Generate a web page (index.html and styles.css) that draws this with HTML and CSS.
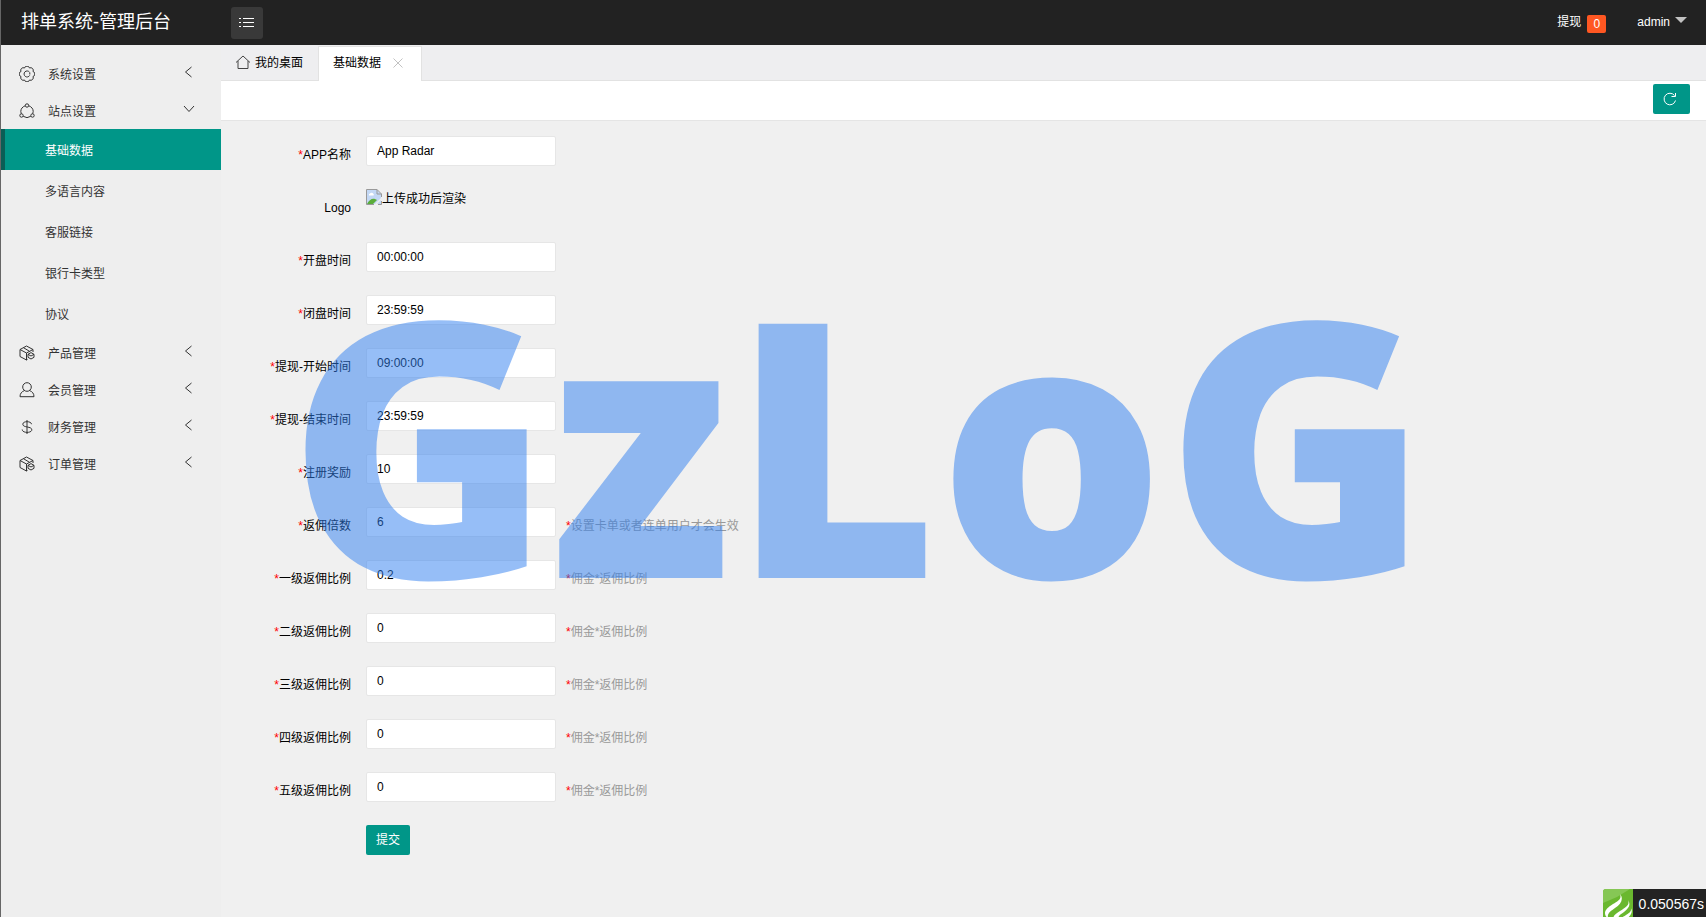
FILE: index.html
```html
<!DOCTYPE html>
<html lang="zh-CN">
<head>
<meta charset="utf-8">
<title>排单系统-管理后台</title>
<link rel="stylesheet" href="styles.css">
</head>
<body>
<svg class="defs" aria-hidden="true">
  <symbol id="i-gear" viewBox="0 0 16 16"><path d="M5.500 2A2.600 2.600 0 0 1 10.500 2 2.600 2.600 0 0 1 14 5.500 2.600 2.600 0 0 1 14 10.500 2.600 2.600 0 0 1 10.500 14 2.600 2.600 0 0 1 5.500 14 2.600 2.600 0 0 1 2 10.500 2.600 2.600 0 0 1 2 5.500 2.600 2.600 0 0 1 5.500 2z"/><path d="M10.500 6.200a3 3 0 1 0 .2 3.200M10.800 6.500v2"/></symbol>
  <symbol id="i-share" viewBox="0 0 16 16"><circle cx="8" cy="2.500" r="1.700"/><circle cx="2.500" cy="12.500" r="1.700"/><circle cx="13.500" cy="12.500" r="1.700"/><path d="M6.300 2.700Q1.800 4.500 1.800 8.500L2.300 10.800M9.700 2.700Q14.200 4.500 14.200 8.500L13.700 10.800M4.200 13.300Q8 16 11.800 13.300"/></symbol>
  <symbol id="i-cube" viewBox="0 0 16 16"><path d="M8.500 14.400 7.500 15 1 11.500V4.500L7.500 1 14 4.500V7M1 4.500 7.500 8 14 4.500M7.500 8v7M4.500 2.700 10.500 6.300"/><path d="M12 7.600l3 1.700v3l-3 1.700-3-1.700v-3zM9 9.300l3 1.700 3-1.700"/></symbol>
  <symbol id="i-user" viewBox="0 0 16 16"><circle cx="8" cy="5" r="4.300"/><path d="M5.500 8.500C2.500 9.700 1 11.700 1 14.700h14c0-3-1.500-5-4.500-6.200"/></symbol>
  <symbol id="i-dollar" viewBox="0 0 16 16"><path d="M12.500 5.200C12.500 2 3.800 1.700 3.800 5.200c0 3.800 9 1.800 9 5.600 0 3.500-9.600 3.500-9.600-.3M8 1v14"/></symbol>
  <symbol id="i-left" viewBox="0 0 16 16"><path d="M10.500 3 4.500 8l6 5"/></symbol>
  <symbol id="i-down" viewBox="0 0 16 16"><path d="M3 5l5 5.500L13 5"/></symbol>
</svg>

<header class="header">
  <h1 class="brand">排单系统-管理后台</h1>
  <button class="toggle" type="button" aria-label="菜单">
    <svg class="icon" viewBox="0 0 16 16"><path d="M4 3.500h11M4 7.500h11M4 11.500h11M0 3.500h2M0 7.500h2M0 11.500h2"/></svg>
  </button>
  <nav class="user-nav">
    <a class="withdraw" href="#">提现<span class="badge">0</span></a>
    <a class="account" href="#">admin<span class="caret"></span></a>
  </nav>
</header>

<div class="shell">
  <aside class="sidebar">
    <nav>
      <a class="menu" href="#"><svg class="icon"><use href="#i-gear"/></svg><span>系统设置</span><svg class="icon arrow"><use href="#i-left"/></svg></a>
      <a class="menu" href="#"><svg class="icon"><use href="#i-share"/></svg><span>站点设置</span><svg class="icon arrow"><use href="#i-down"/></svg></a>
      <div class="submenu">
        <a class="sub active" href="#">基础数据</a>
        <a class="sub" href="#">多语言内容</a>
        <a class="sub" href="#">客服链接</a>
        <a class="sub" href="#">银行卡类型</a>
        <a class="sub" href="#">协议</a>
      </div>
      <a class="menu" href="#"><svg class="icon"><use href="#i-cube"/></svg><span>产品管理</span><svg class="icon arrow"><use href="#i-left"/></svg></a>
      <a class="menu" href="#"><svg class="icon"><use href="#i-user"/></svg><span>会员管理</span><svg class="icon arrow"><use href="#i-left"/></svg></a>
      <a class="menu" href="#"><svg class="icon"><use href="#i-dollar"/></svg><span>财务管理</span><svg class="icon arrow"><use href="#i-left"/></svg></a>
      <a class="menu" href="#"><svg class="icon"><use href="#i-cube"/></svg><span>订单管理</span><svg class="icon arrow"><use href="#i-left"/></svg></a>
    </nav>
  </aside>

  <main class="main">
    <div class="tabs">
      <a class="tab" href="#"><svg class="icon home" viewBox="0 0 16 16"><path d="M1 7.500 8 1l7 6.500M3 6v7.500h10V6"/></svg>我的桌面</a>
      <a class="tab current" href="#">基础数据<svg class="icon close" viewBox="0 0 12 12"><path d="M1.500 1.500l9 9M10.500 1.500l-9 9"/></svg></a>
    </div>
    <div class="toolbar">
      <button class="refresh" type="button" aria-label="刷新"><svg class="icon" viewBox="0 0 16 16"><path d="M12.500 4.500A5.800 5.800 0 1 0 13.500 9.500M13.500 2V5.500H9.500"/></svg></button>
    </div>
    <form class="form">
      <div class="row"><label for="f1"><i>*</i>APP名称</label><input id="f1" type="text" value="App Radar"></div>
      <div class="row"><span class="label">Logo</span><div class="upload"><svg class="broken" viewBox="0 0 16 16"><path fill="#c3d8f5" d="M1 1h10l4 4v10H1z"/><path fill="#fff" d="M3 6.500a1.500 1.500 0 0 1 1-2 2 2 0 0 1 3.500.5 1 1 0 0 1 0 1.500z"/><path fill="#5bad3b" d="M1 15c2-4 5-6 8-5l2 1-4 4z"/><path fill="#f0f0f0" d="M8.500 15.500 15.500 8.500v2L10.500 15.500z"/><path fill="none" stroke="#999" d="M8 15.500H.5V.5h10.500l4.500 4.500v3M11 .5V5h4.500M12 15.500h3.500V12"/></svg>上传成功后渲染</div></div>
      <div class="row"><label for="f2"><i>*</i>开盘时间</label><input id="f2" type="text" value="00:00:00"></div>
      <div class="row"><label for="f3"><i>*</i>闭盘时间</label><input id="f3" type="text" value="23:59:59"></div>
      <div class="row"><label for="f4"><i>*</i>提现-开始时间</label><input id="f4" type="text" value="09:00:00"></div>
      <div class="row"><label for="f5"><i>*</i>提现-结束时间</label><input id="f5" type="text" value="23:59:59"></div>
      <div class="row"><label for="f6"><i>*</i>注册奖励</label><input id="f6" type="text" value="10"></div>
      <div class="row"><label for="f7"><i>*</i>返佣倍数</label><input id="f7" type="text" value="6"><span class="hint"><i>*</i>设置卡单或者连单用户才会生效</span></div>
      <div class="row"><label for="f8"><i>*</i>一级返佣比例</label><input id="f8" type="text" value="0.2"><span class="hint"><i>*</i>佣金*返佣比例</span></div>
      <div class="row"><label for="f9"><i>*</i>二级返佣比例</label><input id="f9" type="text" value="0"><span class="hint"><i>*</i>佣金*返佣比例</span></div>
      <div class="row"><label for="f10"><i>*</i>三级返佣比例</label><input id="f10" type="text" value="0"><span class="hint"><i>*</i>佣金*返佣比例</span></div>
      <div class="row"><label for="f11"><i>*</i>四级返佣比例</label><input id="f11" type="text" value="0"><span class="hint"><i>*</i>佣金*返佣比例</span></div>
      <div class="row"><label for="f12"><i>*</i>五级返佣比例</label><input id="f12" type="text" value="0"><span class="hint"><i>*</i>佣金*返佣比例</span></div>
      <div class="row"><span class="label"></span><button class="submit" type="button">提交</button></div>
    </form>
  </main>
</div>

<div class="watermark">GzLoG</div>

<div class="trace">
  <svg class="trace-logo" viewBox="0 0 30 30"><path fill="#6ab82f" d="M3 0h27v30H0V3q0-3 3-3z"/><path fill="#86c755" d="M3 0h24L14 8 0 14V3q0-3 3-3z"/><path fill="#fff" d="M17 5c2 5-2 7-7 10-5 3-8 6-8 9 0 2 1 4 3 5-1-5 3-7 7-10 6-4 9-9 5-14zM25 11c2 5-2 7-8 11-4 3-8 5-6 8h4c0-3 3-5 6-7 5-4 7-7 4-12zM28 19c1 3-2 5-5 7-3 2-4 2-4 4h4c5-3 7-7 5-11z"/></svg>
  <span class="trace-time">0.050567s</span>
</div>
</body>
</html>
```
FILE: styles.css
```css
* { box-sizing: border-box; }

body {
  margin: 0;
  min-height: 100vh;
  display: flex;
  flex-direction: column;
  border-left: 1px solid #666;
  background: #f0f0f0;
  color: #000;
  font: 12px/20px "Liberation Sans", "Noto Sans CJK SC", sans-serif;
  overflow: hidden;
}

a { color: inherit; text-decoration: none; }
i { color: #f00; font-style: normal; }
.defs { position: absolute; width: 0; height: 0; }

.icon {
  flex: none;
  width: 16px;
  height: 16px;
  fill: none;
  stroke: currentColor;
  stroke-width: 1;
}

.header {
  display: flex;
  align-items: center;
  height: 45px;
  padding: 0 19px 0 20px;
  background: #222;
  color: #fff;
}
.brand {
  width: 210px;
  margin: 0;
  font-size: 18px;
  line-height: 42px;
  padding-bottom: 2px;
  font-weight: 400;
}
.toggle {
  display: grid;
  place-items: center;
  width: 32px;
  height: 32px;
  padding: 0;
  border: 0;
  border-radius: 3px;
  background: #393939;
  color: #fff;
}
.user-nav { display: flex; gap: 31px; margin-left: auto; padding-bottom: 2px; }
.user-nav a { display: flex; align-items: center; }
.badge {
  margin: 4px 0 0 6px;
  width: 19px;
  height: 18px;
  border-radius: 2px;
  background: #ff5722;
  line-height: 18px;
  text-align: center;
}
.caret {
  margin: 0 0 4px 5px;
  border: 6px solid transparent;
  border-top-color: #c2c2c2;
  border-bottom: 0;
}

.shell { display: flex; flex: 1; }
.sidebar {
  flex: none;
  width: 220px;
  padding-top: 10px;
  background: #eee;
  color: #333;
}
.menu {
  display: flex;
  align-items: center;
  height: 37px;
  padding: 1px 24px 0 18px;
}
.menu span { flex: 1; margin-left: 13px; padding-top: 1px; }
.arrow { margin-bottom: 5px; }
.sub {
  display: block;
  height: 41px;
  padding-left: 44px;
  line-height: 44px;
}
.active {
  border-left: 4px solid #0a5e56;
  padding-left: 40px;
  background: #009688;
  color: #fff;
}

.main { flex: 1; min-width: 0; }
.tabs {
  display: flex;
  height: 36px;
  padding-top: 1px;
  border-bottom: 1px solid #e2e2e2;
  background: #eeeef0;
}
.tab {
  display: flex;
  align-items: center;
  gap: 4px;
  height: 34px;
  padding: 0 15px 0 14px;
}
.home { color: #444; }
.current {
  gap: 11px;
  height: 35px;
  padding: 0 17px 2px 14px;
  border: 1px solid #e2e2e2;
  border-bottom: 0;
  background: #fff;
}
.close { width: 12px; height: 12px; color: #c2c2c2; }
.toolbar {
  display: flex;
  justify-content: flex-end;
  height: 40px;
  padding: 3px 16px;
  border-bottom: 1px solid #e5e5e5;
  background: #fff;
}
.refresh {
  display: grid;
  place-items: center;
  width: 37px;
  height: 30px;
  padding: 0 3px 0 0;
  border: 0;
  border-radius: 2px;
  background: #009688;
  color: #fff;
}

.form { padding: 15px 20px; }
.row { display: flex; align-items: flex-start; height: 53px; }
.row label, .label {
  width: 110px;
  padding-top: 9px;
  text-align: right;
}
.row input {
  width: 190px;
  height: 30px;
  margin-left: 15px;
  padding: 0 10px;
  border: 1px solid #e6e6e6;
  border-radius: 2px;
  background: #fff;
  color: #000;
  font: inherit;
}
.hint { padding: 9px 0 0 10px; color: #999; }
.upload { display: flex; margin-left: 15px; }
.broken { width: 16px; height: 16px; }
.submit {
  height: 30px;
  margin-left: 15px;
  padding: 0 10px;
  border: 0;
  border-radius: 2px;
  background: #009688;
  color: #fff;
  font: inherit;
}

.watermark {
  position: absolute;
  top: 440px;
  left: 50%;
  padding-left: 10px;
  transform: translate(-50%, -50%);
  color: rgba(45, 125, 240, 0.5);
  font: 900 356px/1 "Noto Sans", sans-serif;
  pointer-events: none;
}

.trace {
  position: fixed;
  right: 0;
  bottom: 0;
  display: flex;
  height: 28px;
  overflow: hidden;
}
.trace-logo { width: 30px; height: 30px; }
.trace-time {
  padding: 0 2px 0 6px;
  background: #232323;
  color: #fff;
  font-size: 14px;
  line-height: 30px;
}
```
